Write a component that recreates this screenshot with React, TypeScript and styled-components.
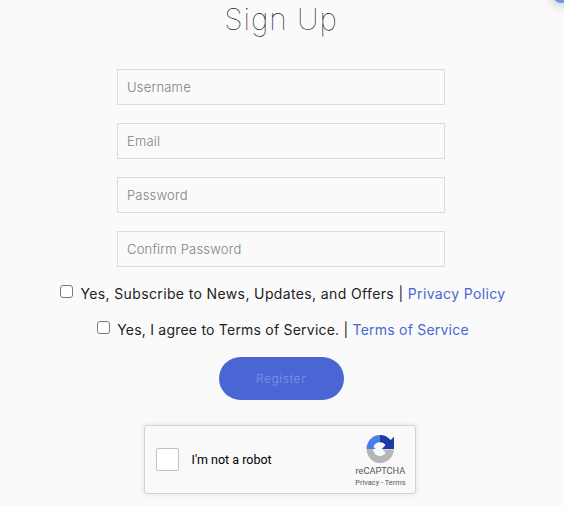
import styled, { createGlobalStyle } from "styled-components";

const GlobalStyle = createGlobalStyle`
  html, body {
    margin: 0;
    padding: 0;
    height: 506px;
    overflow: hidden;
    background: #fafafa;
    font-family: Inter, "Open Sans", sans-serif;
  }
`;

const App = () => {
  return (
    <Page>
      <GlobalStyle />
      <CornerBadge />
      <Title>Sign Up</Title>
      <Form>
        <Field placeholder="Username" />
        <Field placeholder="Email" />
        <Field placeholder="Password" />
        <Field placeholder="Confirm Password" />
      </Form>
      <CheckRow $spacing={0.37}>
        <Check type="checkbox" />
        <span>
          Yes, Subscribe to News, Updates, and Offers | <Link>Privacy Policy</Link>
        </span>
      </CheckRow>
      <CheckRow $spacing={0.22}>
        <Check type="checkbox" />
        <span>
          Yes, I agree to Terms of Service. | <Link>Terms of Service</Link>
        </span>
      </CheckRow>
      <RegisterButton>Register</RegisterButton>
      <Captcha>
        <CaptchaBox />
        <CaptchaLabel>I'm not a robot</CaptchaLabel>
        <CaptchaBrand>
          <svg width="28" height="28" viewBox="0 0 30 30">
            <path d="M0.5 15 C0.8 6.5 7 0 15 0 L15 7.8 C11.5 7.8 8.8 10 8 12.5 L10.5 15 Z" fill="#4a7fe8" />
            <path d="M15 0 C19.6 0 23.7 2.1 26.5 5.3 L30 2 L30 15 L17 15 L21 10.8 C19.6 9 17.5 7.8 15 7.8 Z" fill="#1f3aa6" />
            <path d="M0.5 15 L7.5 15 C7.8 19.5 11 22.5 15 22.5 C18 22.5 20 21 21 19 L17.5 15.5 L29.8 15.5 C29.5 24 23 30 15 30 C7 30 1 23.5 0.5 15 Z" fill="#b6b6b6" />
          </svg>
          <BrandName>reCAPTCHA</BrandName>
          <BrandLinks>Privacy - Terms</BrandLinks>
        </CaptchaBrand>
      </Captcha>
    </Page>
  );
};

export default App;

const Page = styled.div`
  box-sizing: border-box;
  display: flex;
  flex-direction: column;
  align-items: center;
  width: 564px;
  height: 506px;
  padding-right: 2px;
  overflow: hidden;
  position: relative;
`;

const CornerBadge = styled.div`
  position: absolute;
  top: -13px;
  right: -5px;
  width: 16px;
  height: 16px;
  border-radius: 50%;
  background: #6f93e8;
  box-shadow: 0 0 10px 4px rgba(0, 0, 0, 0.14);
`;

const Title = styled.h1`
  margin: 0;
  height: 69px;
  font-size: 30px;
  font-weight: 100;
  line-height: 39px;
  letter-spacing: 0.9px;
  color: #222;
`;

const Form = styled.div`
  display: flex;
  flex-direction: column;
  gap: 18px;
  width: 328px;
  margin-bottom: 8px;
`;

const Field = styled.input`
  box-sizing: border-box;
  width: 100%;
  height: 36px;
  padding: 0 9px;
  background: #fafafa;
  border: 1px solid #dcdcdc;
  outline: none;
  font-family: inherit;
  font-size: 13px;
  font-weight: 300;
  letter-spacing: 0.2px;

  &::placeholder {
    color: #808080;
    opacity: 1;
  }
`;

const CheckRow = styled.label<{ $spacing: number }>`
  display: flex;
  align-items: center;
  gap: 7px;
  height: 36px;
  padding-left: 4px;
  font-size: 14px;
  letter-spacing: ${({ $spacing }) => $spacing}px;
  color: #222;
`;

const Check = styled.input`
  appearance: none;
  box-sizing: border-box;
  width: 13px;
  height: 13px;
  margin: 0 0 3px;
  background: #fff;
  border: 1px solid #7a7a7a;
  border-radius: 3px;
`;

const Link = styled.a`
  color: #4a66d4;
`;

const RegisterButton = styled.button`
  width: 125px;
  height: 43px;
  margin-top: 10px;
  border: none;
  border-radius: 22px;
  background: #4a66d4;
  color: #7f95e6;
  font-family: inherit;
  font-size: 12px;
  font-weight: 300;
  letter-spacing: 0.6px;
`;

const Captcha = styled.div`
  box-sizing: border-box;
  display: flex;
  align-items: center;
  width: 272px;
  height: 69px;
  margin-top: 25px;
  margin-left: -3px;
  padding: 0 9px 0 11px;
  background: #f9f9f9;
  border: 1px solid #d3d3d3;
  border-radius: 3px;
  box-shadow: 0 0 4px 1px rgba(0, 0, 0, 0.08);
  font-family: Roboto, sans-serif;
`;

const CaptchaBox = styled.div`
  box-sizing: border-box;
  width: 23px;
  height: 23px;
  background: #fff;
  border: 1px solid #c1c1c1;
  border-radius: 2px;
`;

const CaptchaLabel = styled.div`
  flex: 1;
  margin-left: 13px;
  font-size: 12.5px;
  color: #000;
`;

const CaptchaBrand = styled.div`
  display: flex;
  flex-direction: column;
  align-items: center;
  margin-top: 4px;
  color: #555;
`;

const BrandName = styled.div`
  margin-top: 2px;
  font-size: 9.2px;
  line-height: 12px;
`;

const BrandLinks = styled.div`
  margin-top: 1px;
  font-size: 7.4px;
  line-height: 10px;
`;
